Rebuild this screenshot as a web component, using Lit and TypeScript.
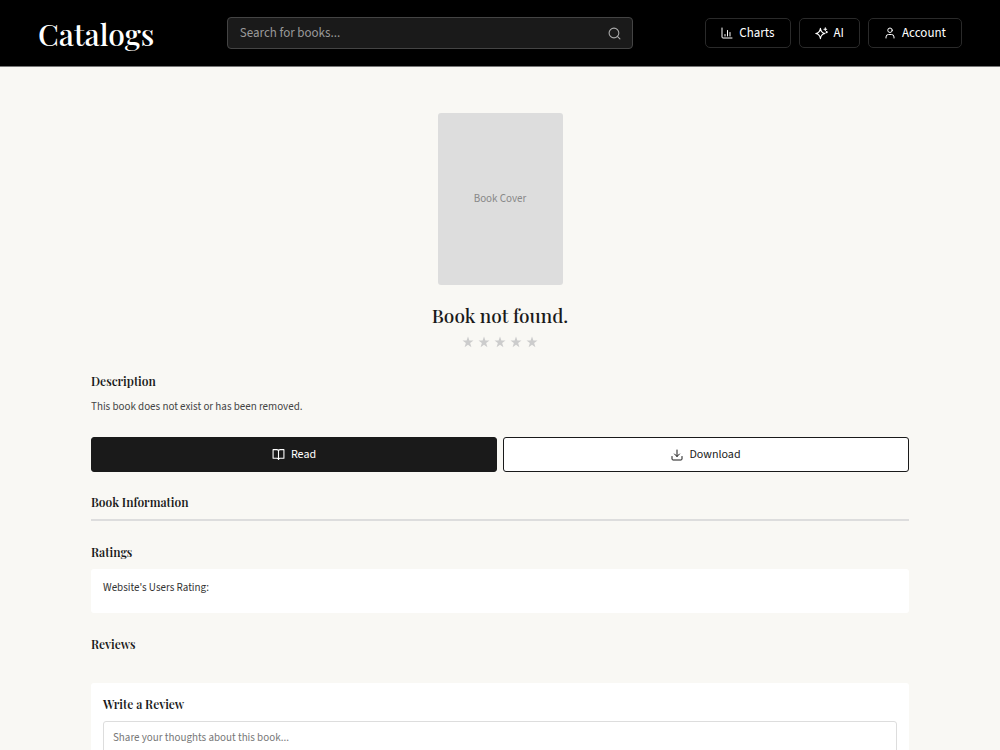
import { LitElement, html, css, svg } from "lit";
import { customElement, state } from "lit/decorators.js";

const icon = (body: unknown, size = 14) => html`<svg
  class="icon" width=${size} height=${size} viewBox="0 0 24 24" fill="none" stroke="currentColor"
  stroke-width="2" stroke-linecap="round" stroke-linejoin="round" aria-hidden="true">${body}</svg>`;

const icons = {
  search: svg`<circle cx="11" cy="11" r="9"/><path d="m22 22-4.6-4.6"/>`,
  chart: svg`<path d="M2 2v18a2 2 0 0 0 2 2h18"/><path d="M8 18v-3"/><path d="M13 18V7"/><path d="M18 18v-7"/>`,
  sparkles: svg`<path d="M10 2.500c.9 6.500 2.700 8.600 8.500 9.500-5.800.9-7.600 3-8.500 9.500-.9-6.500-2.700-8.600-8.500-9.500 5.800-.9 7.600-3 8.500-9.500z"/><path d="M19 1.500v5M16.500 4h5"/><circle cx="21.500" cy="9.500" r="1"/>`,
  user: svg`<circle cx="12" cy="6.500" r="4.500"/><path d="M4 22v-2a5 5 0 0 1 5-5h6a5 5 0 0 1 5 5v2"/>`,
  book: svg`<path d="M12 5v16M2 3h7a3 3 0 0 1 3 3 3 3 0 0 1 3-3h7v16h-7a3 3 0 0 0-3 2 3 3 0 0 0-3-2H2z"/>`,
  download: svg`<path d="M12 2v13"/><path d="m7 10 5 5 5-5"/><path d="M2 15v5a2 2 0 0 0 2 2h16a2 2 0 0 0 2-2v-5"/>`,
  star: svg`<path fill="currentColor" stroke="none" d="M12 1l2.800 8H23l-6.700 5 2.500 8.300L12 17.300 5.200 22.300 7.700 14 1 9h8.200z"/>`,
};

@customElement("app-root")
export class AppRoot extends LitElement {
  @state() private rating = 0;

  static styles = css`
    :host {
      display: block;
      min-height: 100vh;
      background: #f9f8f4;
      color: #1a1a1a;
      font: 11px/18px "Source Sans 3", Roboto, "Liberation Sans", sans-serif;
      --serif: "Playfair Display", "Liberation Serif", serif;
    }
    * { box-sizing: border-box; }
    h1, h2, h3, p { margin: 0; }
    button, input, textarea { font: inherit; color: inherit; }
    a { color: inherit; text-decoration: none; }
    .icon { display: block; flex: none; }
    .header {
      display: flex;
      align-items: center;
      justify-content: space-between;
      gap: 16px;
      height: 67px;
      padding: 0 38px;
      background: #000;
      color: #fff;
      border-bottom: 1px solid #777;
    }
    .logo { font: 500 30px/40px var(--serif); padding-top: 2px; }
    .search {
      display: flex;
      flex: 0 1 406px;
      min-width: 0;
      align-items: center;
      height: 32px;
      padding: 0 11px 0 12px;
      background: #1a1a1a;
      border: 1px solid #444;
      border-radius: 4px;
    }
    .query {
      flex: 1;
      min-width: 0;
      padding: 0;
      border: 0;
      outline: 0;
      background: none;
      font-size: 13px;
    }
    .query::placeholder { color: #999; opacity: 1; }
    .go { padding: 0; border: 0; background: none; color: #aaa; }
    .nav { display: flex; gap: 8px; }
    .link {
      display: flex;
      align-items: center;
      gap: 6px;
      height: 30px;
      padding: 0 15px;
      border: 1px solid #2a2a2a;
      border-radius: 5px;
      font-size: 13px;
    }
    .page { max-width: 850px; margin: 0 auto; padding: 46px 16px 32px; }
    .hero { display: flex; flex-direction: column; align-items: center; }
    .cover {
      display: grid;
      place-items: center;
      width: 125px;
      height: 172px;
      background: #ddd;
      border-radius: 3px;
      color: #888;
    }
    .title { margin-top: 16px; font: 500 19px/28px var(--serif); }
    .stars { display: flex; gap: 4px; margin-top: 7px; }
    .star { padding: 0; border: 0; background: none; color: #ccc; }
    .star.on { color: #e0a526; }
    .heading { font: 600 12px/20px var(--serif); }
    .description { margin-top: 23px; }
    .text { margin-top: 7px; color: #444; }
    .actions { display: grid; grid-template-columns: 1fr 1fr; gap: 6px; margin-top: 21px; }
    .action {
      display: flex;
      align-items: center;
      justify-content: center;
      gap: 6px;
      height: 35px;
      border: 1px solid #1a1a1a;
      border-radius: 3px;
      background: #fff;
      font-size: 12px;
    }
    .primary { background: #1a1a1a; color: #fff; }
    .info { margin-top: 20px; padding-bottom: 7px; border-bottom: 2px solid #ddd; }
    .ratings { margin-top: 21px; }
    .card { background: #fff; border-radius: 3px; padding: 10px 12px 12px; }
    .score { margin-top: 7px; min-height: 44px; color: #333; }
    .reviews { margin-top: 21px; }
    .write { display: flex; flex-direction: column; margin-top: 29px; padding-top: 11px; }
    .review {
      display: block;
      width: 100%;
      height: 80px;
      margin-top: 7px;
      padding: 7px 9px;
      border: 1px solid #ddd;
      border-radius: 3px;
      background: #fff;
      resize: vertical;
    }
    .review::placeholder { color: #777; opacity: 1; }
  `;

  render() {
    return html`
      <header class="header">
        <a class="logo" href="#">Catalogs</a>
        <form class="search" role="search" @submit=${(e: Event) => e.preventDefault()}>
          <input class="query" type="search" aria-label="Search for books" placeholder="Search for books..." />
          <button class="go" aria-label="Search">${icon(icons.search, 13)}</button>
        </form>
        <nav class="nav">
          <a class="link" href="#charts">${icon(icons.chart, 12)}Charts</a>
          <a class="link" href="#ai">${icon(icons.sparkles, 13)}AI</a>
          <a class="link" href="#account">${icon(icons.user, 12)}Account</a>
        </nav>
      </header>
      <main class="page">
        <section class="hero">
          <div class="cover">Book Cover</div>
          <h1 class="title">Book not found.</h1>
          <div class="stars">
            ${[1, 2, 3, 4, 5].map((n) => html`<button
              class="star ${n <= this.rating ? "on" : ""}" aria-label="${n} stars"
              @click=${() => (this.rating = n)}>${icon(icons.star, 12)}</button>`)}
          </div>
        </section>
        <section class="description">
          <h2 class="heading">Description</h2>
          <p class="text">This book does not exist or has been removed.</p>
        </section>
        <div class="actions">
          <button class="action primary">${icon(icons.book, 13)}Read</button>
          <button class="action">${icon(icons.download, 12)}Download</button>
        </div>
        <section class="info"><h2 class="heading">Book Information</h2></section>
        <section class="ratings">
          <h2 class="heading">Ratings</h2>
          <div class="card score">Website's Users Rating:</div>
        </section>
        <section class="reviews">
          <h2 class="heading">Reviews</h2>
          <div class="card write">
            <h3 class="heading"><label for="review">Write a Review</label></h3>
            <textarea class="review" id="review" placeholder="Share your thoughts about this book..."></textarea>
          </div>
        </section>
      </main>
    `;
  }
}
